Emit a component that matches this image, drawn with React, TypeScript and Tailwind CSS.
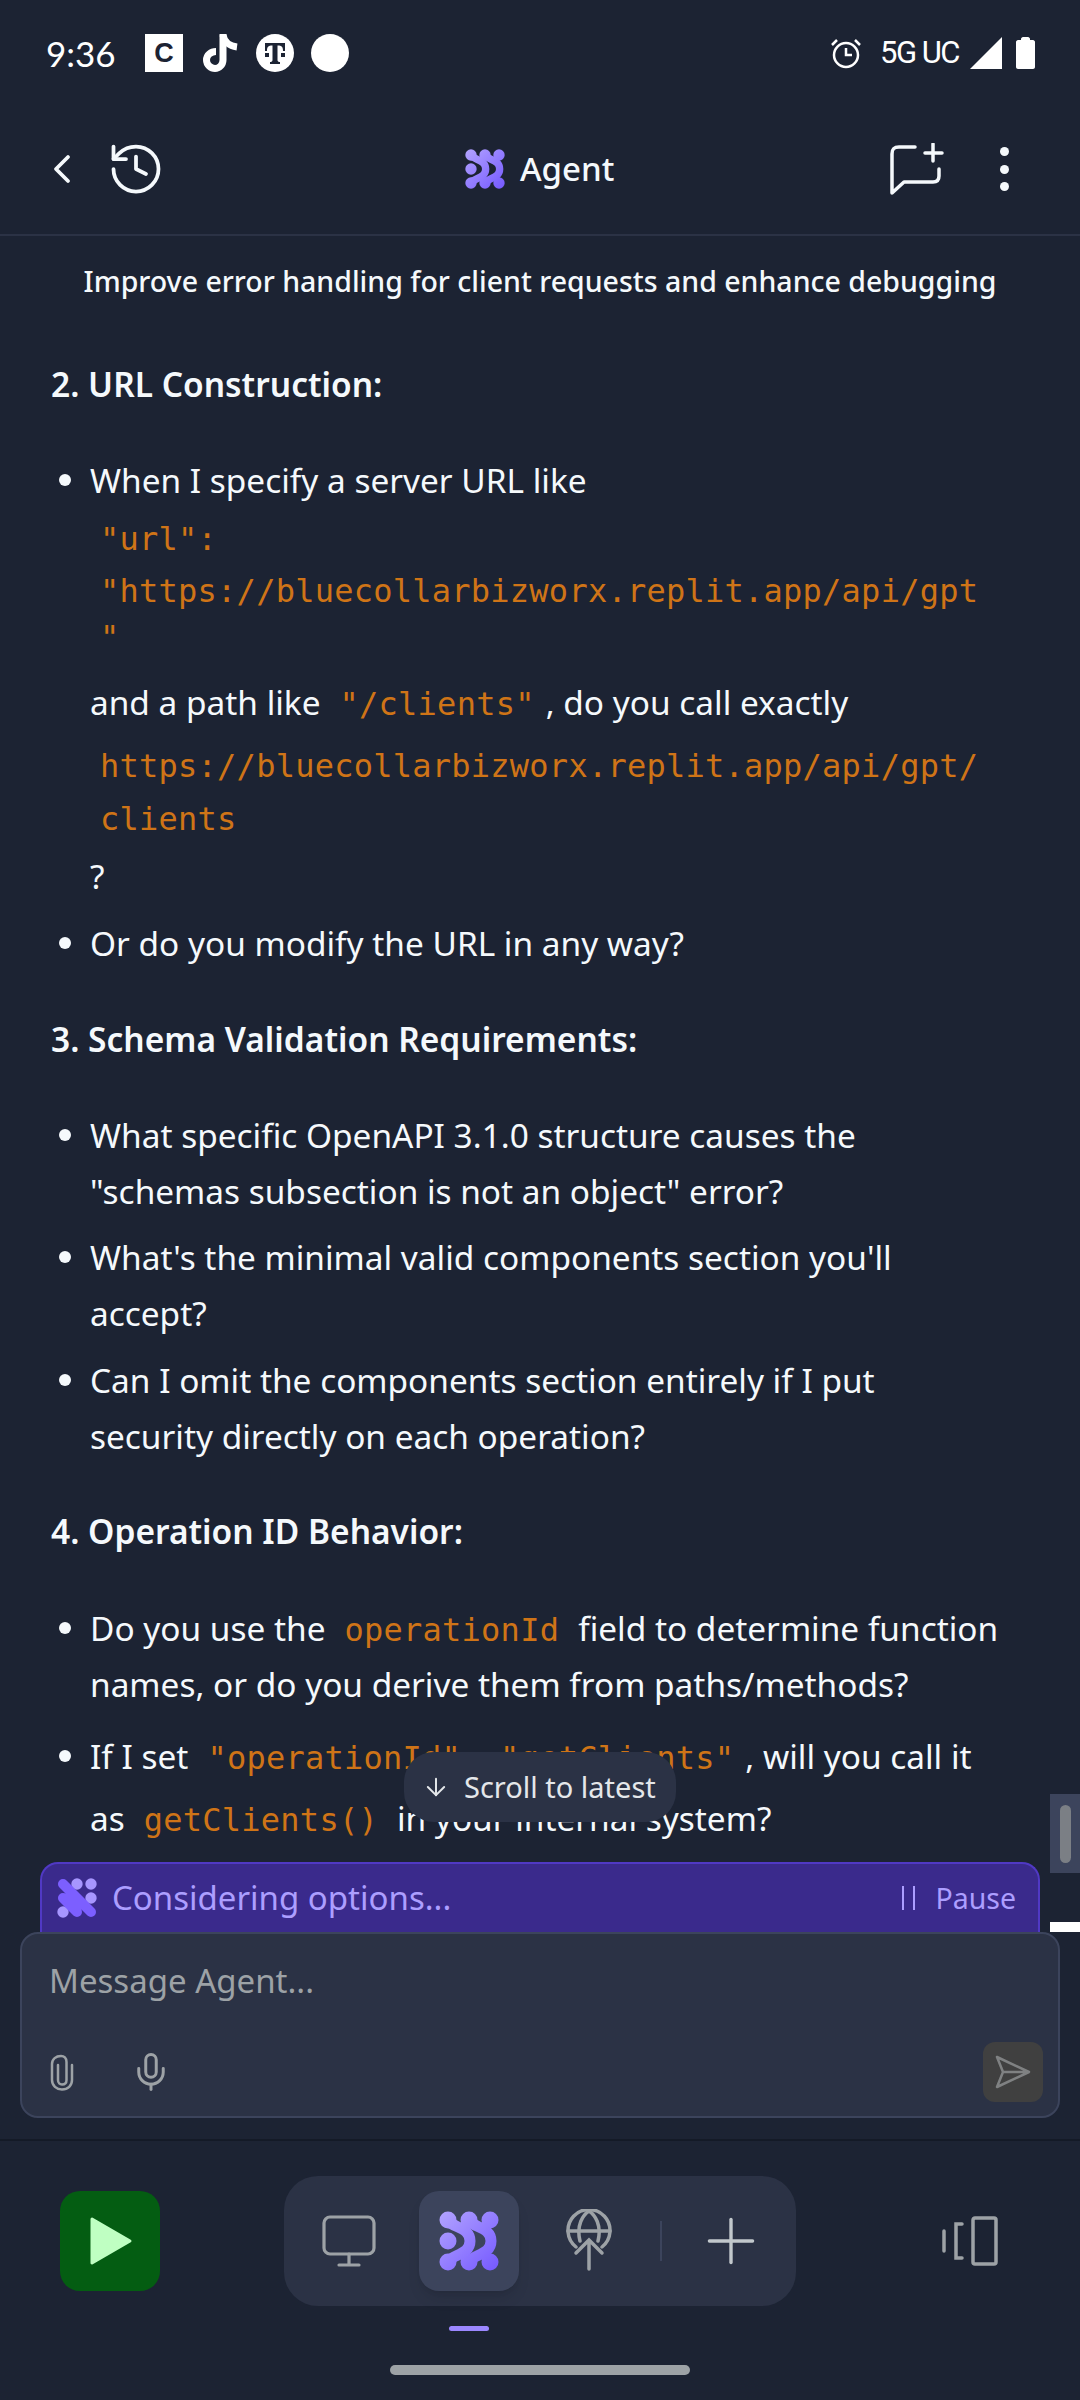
import { ArrowDown, ChevronLeft, History, Mic, Plus } from "lucide-react";

const sans = "font-['Noto_Sans','Liberation_Sans',sans-serif]";

const AgentLogo = ({ id, className }: { id: string; className: string }) => (
  <svg viewBox="0 0 60 60" className={className}>
    <defs>
      <linearGradient id={id} gradientUnits="userSpaceOnUse" x1="0" y1="0" x2="60" y2="60">
        <stop offset="0" stopColor="#b3a4ff" />
        <stop offset="1" stopColor="#7458ff" />
      </linearGradient>
    </defs>
    <g fill={`url(#${id})`}>
      <circle cx="9" cy="9" r="8.500" />
      <circle cx="30" cy="9" r="8.500" />
      <circle cx="51" cy="9" r="8.500" />
      <circle cx="9" cy="30" r="8.500" />
      <circle cx="9" cy="51" r="8.500" />
      <circle cx="30" cy="51" r="8.500" />
      <circle cx="51" cy="51" r="8.500" />
      <path fill="none" stroke={`url(#${id})`} strokeWidth="11" strokeLinecap="round" d="M9 10C16 17 31 17 31 30C31 43 16 43 9 50" />
      <path fill="none" stroke={`url(#${id})`} strokeWidth="11" strokeLinecap="round" d="M30 10C37 17 52 17 52 30C52 43 37 43 30 50" />
    </g>
  </svg>
);

const Code = ({ children, className = "" }: { children: React.ReactNode; className?: string }) => (
  <code className={`font-['DejaVu_Sans_Mono',monospace] text-[32px] tracking-[0.25px] text-[#cf7417] ${className}`}>
    {children}
  </code>
);

const Heading = ({ children, className }: { children: React.ReactNode; className: string }) => (
  <h3 className={`pl-[51px] text-[33.500px] leading-[56px] font-semibold text-[#f5f9fc] ${className}`}>{children}</h3>
);

const Bullet = ({ children, className = "" }: { children: React.ReactNode; className?: string }) => (
  <li className={`relative pl-[90px] ${className}`}>
    <span className="absolute left-[59px] top-[22px] h-[12px] w-[12px] rounded-full bg-[#f5f9fc]" />
    {children}
  </li>
);

const Line = ({ children, className = "" }: { children: React.ReactNode; className?: string }) => (
  <div className={`h-[56px] whitespace-nowrap leading-[56px] ${className}`}>{children}</div>
);

const CodeLine = ({ children, className }: { children: React.ReactNode; className: string }) => (
  <div className={`h-[50px] whitespace-nowrap pl-[10px] leading-[50px] ${className}`}>
    <Code>{children}</Code>
  </div>
);

const StatusBar = () => (
  <div className="flex h-[108px] items-center pb-[2px] text-white">
    <span className="ml-[46px] w-[71px] font-['Lato',sans-serif] text-[35px]">9:36</span>
    <span className="ml-[28px] flex h-[38px] w-[38px] items-center justify-center bg-white font-['Liberation_Sans',sans-serif] text-[27px] font-bold text-[#1c2333]">
      C
    </span>
    <svg viewBox="0 0 36 38" className="ml-[19px] h-[38px] w-[36px]" fill="none" stroke="white">
      <path strokeWidth="7" d="M21 0V26C21 31 17 34.500 13 34.500C9 34.500 4.500 31 4.500 26C4.500 21 9 17.500 14 17.500" />
      <path strokeWidth="7" d="M21 1C22 7 27 12 35 13" />
    </svg>
    <span className="ml-[18px] flex h-[38px] w-[38px] items-center justify-center rounded-full bg-white">
      <svg viewBox="0 0 26 26" className="h-[26px] w-[26px]" fill="#1c2333">
        <path d="M3 3H23V11H21C21 7 20 5.500 15.500 5.500V20C15.500 21.500 16.500 22 18 22V24H8V22C9.500 22 10.500 21.500 10.500 20V5.500C6 5.500 5 7 5 11H3Z" />
        <rect x="3" y="13" width="4" height="4" />
        <rect x="19" y="13" width="4" height="4" />
      </svg>
    </span>
    <span className="ml-[17px] h-[38px] w-[38px] rounded-full bg-white" />
    <svg viewBox="0 0 32 32" className="ml-[481px] h-[32px] w-[32px]" fill="none" stroke="white" strokeWidth="2.500">
      <circle cx="16" cy="18" r="12" />
      <path d="M16 11V18H22M2 8L7 3M30 8L25 3" />
    </svg>
    <span className="ml-[18px] w-[86px] font-['Roboto',sans-serif] text-[31px] tracking-[-1.500px]">5G UC</span>
    <svg viewBox="0 0 32 32" className="ml-[4px] h-[32px] w-[32px]" fill="white">
      <path d="M32 0V32H0Z" />
    </svg>
    <svg viewBox="0 0 19 32" className="ml-[14px] h-[32px] w-[19px]" fill="white">
      <path d="M5 2C5 1 6 0 7 0H12C13 0 14 1 14 2V3H17C18 3 19 4 19 5V30C19 31 18 32 17 32H2C1 32 0 31 0 30V5C0 4 1 3 2 3H5Z" />
    </svg>
  </div>
);

const Header = () => (
  <header className="flex h-[128px] items-center border-b-2 border-[#2b3245] pb-[4px] text-[#f5f9fc]">
    <ChevronLeft className="ml-[38px] h-[48px] w-[48px]" strokeWidth={1.900} />
    <History className="ml-[20px] h-[60px] w-[60px]" strokeWidth={1.500} />
    <AgentLogo id="header-logo" className="ml-[299px] h-[40px] w-[40px]" />
    <span className="ml-[15px] w-[94px] text-[33px] font-medium">Agent</span>
    <svg viewBox="0 0 54 52" className="ml-[276px] h-[52px] w-[54px]" fill="none" stroke="#f5f9fc" strokeWidth="3.500" strokeLinecap="round" strokeLinejoin="round">
      <path d="M25 4H9C4 4 2 6 2 11V50L14 39H43C47 39 49 37 49 33V26" />
      <path d="M43 1V18M35 10H52" />
    </svg>
    <span className="ml-[56px] flex flex-col gap-[8.500px]">
      <span className="h-[9px] w-[9px] rounded-full bg-[#f5f9fc]" />
      <span className="h-[9px] w-[9px] rounded-full bg-[#f5f9fc]" />
      <span className="h-[9px] w-[9px] rounded-full bg-[#f5f9fc]" />
    </span>
  </header>
);

const Messages = () => (
  <div className="h-[1626px] overflow-hidden text-[33.400px] text-[#f5f9fc]">
    <p className="mt-[17px] text-center text-[28.500px] leading-[56px] font-medium">
      Improve error handling for client requests and enhance debugging
    </p>
    <Heading className="mt-[47px]">2. URL Construction:</Heading>
    <ul className="mt-[40px]">
      <Bullet>
        <Line>When I specify a server URL like</Line>
        <CodeLine className="mt-[4px]">"url":</CodeLine>
        <CodeLine className="mt-[2px]">"https://bluecollarbizworx.replit.app/api/gpt</CodeLine>
        <CodeLine className="-mt-[4px]">"</CodeLine>
        <Line className="mt-[14px]">
          and a path like<Code className="ml-[19px] mr-[11px]">"/clients"</Code>, do you call exactly
        </Line>
        <CodeLine className="mt-[9px]">https://bluecollarbizworx.replit.app/api/gpt/</CodeLine>
        <CodeLine className="mt-[3px]">clients</CodeLine>
        <Line className="mt-[6px]">?</Line>
      </Bullet>
      <Bullet className="mt-[11px]">
        <Line>Or do you modify the URL in any way?</Line>
      </Bullet>
    </ul>
    <Heading className="mt-[40px]">3. Schema Validation Requirements:</Heading>
    <ul className="mt-[40px]">
      <Bullet>
        <Line>What specific OpenAPI 3.1.0 structure causes the</Line>
        <Line>"schemas subsection is not an object" error?</Line>
      </Bullet>
      <Bullet className="mt-[10px]">
        <Line>What's the minimal valid components section you'll</Line>
        <Line>accept?</Line>
      </Bullet>
      <Bullet className="mt-[11px]">
        <Line>Can I omit the components section entirely if I put</Line>
        <Line>security directly on each operation?</Line>
      </Bullet>
    </ul>
    <Heading className="mt-[39px]">4. Operation ID Behavior:</Heading>
    <ul className="mt-[41px]">
      <Bullet>
        <Line>
          Do you use the<Code className="ml-[19px] mr-[19px]">operationId</Code>field to determine function
        </Line>
        <Line>names, or do you derive them from paths/methods?</Line>
      </Bullet>
      <Bullet className="mt-[16px]">
        <Line>
          If I set<Code className="ml-[19px] mr-[11px]">"operationId": "getClients"</Code>, will you call it
        </Line>
        <Line className="mt-[6px]">
          as<Code className="ml-[19px] mr-[19px]">getClients()</Code>in your internal system?
        </Line>
      </Bullet>
    </ul>
  </div>
);

const ThinkingLogo = () => (
  <svg viewBox="0 0 60 60" className="h-[40px] w-[40px]">
    <g fill="#a796ff">
      <circle cx="30" cy="9" r="8.500" />
      <circle cx="51" cy="9" r="8.500" />
      <circle cx="51" cy="30" r="8.500" />
      <circle cx="9" cy="51" r="8.500" />
    </g>
    <path d="M9 9L51 51M9 30L30 51" fill="none" stroke="#7c5fff" strokeWidth="15" strokeLinecap="round" />
  </svg>
);

const Composer = () => (
  <div className="relative ml-[20px] h-[186px] w-[1040px] rounded-[18px] border-2 border-[#3c445c] bg-[#2b3245]">
    <div className="pl-[27px] pt-[24px] text-[33px] leading-[46px] text-[#9da2a6]">Message Agent...</div>
    <div className="mt-[38px] flex items-center pl-[28px] pr-[15px] text-[#9da2a6]">
      <svg viewBox="0 0 24 37" className="h-[37px] w-[24px]" fill="none" stroke="currentColor" strokeWidth="2.500" strokeLinecap="round">
        <path d="M8 11V26C8 29 10 30.500 12 30.500C14.500 30.500 16.500 29 16.500 26V8C16.500 4 14 2 11 2C6 2 2 5 2 10V26C2 31.500 6.500 35.500 12 35.500C18 35.500 22 31.500 22 26V11" />
      </svg>
      <Mic className="ml-[56px] h-[42px] w-[42px]" strokeWidth={1.700} />
      <span className="ml-auto flex h-[60px] w-[60px] items-center justify-center rounded-[12px] bg-[#404040]">
        <svg viewBox="0 0 36 34" className="h-[34px] w-[36px]" fill="none" stroke="#7f8182" strokeWidth="2.500" strokeLinejoin="round">
          <path d="M2 2L34 17L2 32L8 17ZM8 17H34" />
        </svg>
      </span>
    </div>
  </div>
);

const BottomNav = () => (
  <nav className="flex h-[261px] flex-col border-t-2 border-[#141a27]">
    <div className="mt-[35px] flex items-start">
      <button className="ml-[60px] mt-[15px] flex h-[100px] w-[100px] items-center justify-center rounded-[20px] bg-[#045d12] pl-[2px]">
        <svg viewBox="0 0 44 50" className="h-[50px] w-[44px]" fill="#bfffc2" stroke="#bfffc2" strokeWidth="3" strokeLinejoin="round">
          <path d="M3 3L41 25L3 47Z" />
        </svg>
      </button>
      <div className="ml-[124px] flex h-[130px] w-[512px] items-center rounded-[34px] bg-[#2b3245]">
        <svg viewBox="0 0 54 52" className="ml-[38px] h-[52px] w-[54px]" fill="none" stroke="#9da2a6" strokeWidth="3.200" strokeLinecap="round">
          <rect x="2" y="2" width="50" height="37" rx="6" />
          <path d="M27 39V49M17 50H37" />
        </svg>
        <span className="ml-[43px] flex h-[100px] w-[100px] items-center justify-center rounded-[20px] bg-[#3c445c] shadow-lg">
          <AgentLogo id="nav-logo" className="h-[60px] w-[60px]" />
        </span>
        <svg viewBox="0 0 48 64" className="ml-[46px] h-[64px] w-[48px]" fill="none" stroke="#9da2a6" strokeWidth="3.500" strokeLinecap="round">
          <path d="M11 38A21 21 0 1 1 37 38" />
          <path d="M15 32C11 16 18 6 24 2C30 6 37 16 33 32" />
          <path d="M3 22H45" />
          <path d="M24 60V31M11 44L24 31L37 44" />
        </svg>
        <span className="ml-[47px] h-[40px] w-[2px] bg-[#3c445c]" />
        <Plus className="ml-[32px] h-[74px] w-[74px] text-[#c2c8cc]" strokeWidth={1.100} />
      </div>
      <svg viewBox="0 0 56 50" className="ml-[146px] mt-[40px] h-[50px] w-[56px]" fill="none" stroke="#9da2a6" strokeWidth="3.500" strokeLinecap="round">
        <path d="M2 15V35" />
        <path d="M20 8H14V42H20" />
        <rect x="31" y="2" width="23" height="46" rx="2" />
      </svg>
    </div>
    <span className="ml-[449px] mt-[20px] h-[5px] w-[40px] rounded-full bg-[#9b87ff]" />
    <span className="ml-[390px] mt-[34px] h-[10px] w-[300px] rounded-full bg-[#9da2a6]" />
  </nav>
);

export default function App() {
  return (
    <div className={`relative h-[2400px] w-[1080px] overflow-hidden bg-[#1c2333] ${sans}`}>
      <StatusBar />
      <Header />
      <main className="relative">
        <Messages />
        <div className="ml-[40px] flex h-[70px] w-[1000px] items-center rounded-t-[18px] border-x-2 border-t-2 border-[#5039c4] bg-[#3a2a8c] pl-[15px] pr-[22px] text-[#ac9eff]">
          <ThinkingLogo />
          <span className="ml-[15px] text-[33px]">Considering options...</span>
          <span className="ml-auto mr-[20px] h-[24px] w-[13px] border-x-2 border-[#ac9eff]" />
          <span className="text-[28.500px]">Pause</span>
        </div>
        <Composer />
        <div className="absolute left-[404px] top-[1516px] flex h-[70px] w-[272px] items-center rounded-[30px] bg-[#2b3245] pl-[18px] text-[29px] text-[#e4e7ea]">
          <ArrowDown className="h-[28px] w-[28px]" strokeWidth={1.700} />
          <span className="ml-[14px] whitespace-nowrap">Scroll to latest</span>
        </div>
        <div className="absolute left-[1050px] top-[1558px] flex h-[79px] w-[30px] justify-center bg-[#3c445c] pt-[11px]">
          <span className="h-[58px] w-[11px] rounded-full bg-[#7b7f85]" />
        </div>
        <div className="absolute left-[1050px] top-[1686px] h-[10px] w-[30px] bg-white" />
      </main>
      <div className="h-[21px]" />
      <BottomNav />
    </div>
  );
}
